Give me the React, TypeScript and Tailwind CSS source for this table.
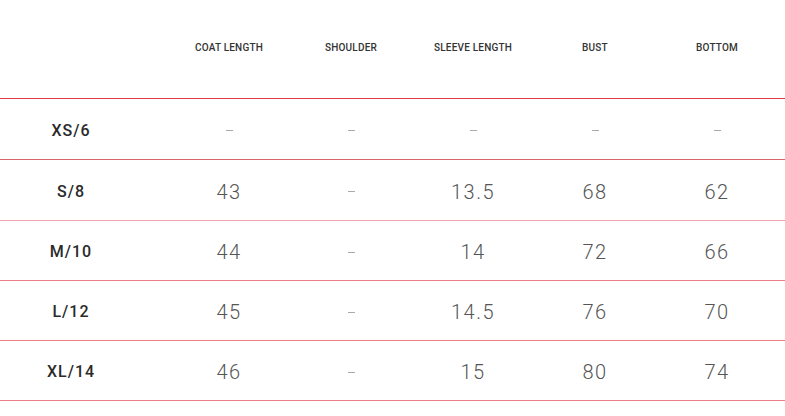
const columns = ["COAT LENGTH", "SHOULDER", "SLEEVE LENGTH", "BUST", "BOTTOM"];

const rows: { size: string; values: string[]; h: string; line: string }[] = [
  { size: "XS/6", values: ["-", "-", "-", "-", "-"], h: "h-[60px]", line: "bg-[#d9646c]" },
  { size: "S/8", values: ["43", "-", "13.5", "68", "62"], h: "h-[60px]", line: "bg-[#f0a3aa]" },
  { size: "M/10", values: ["44", "-", "14", "72", "66"], h: "h-[59px]", line: "bg-[#ec7d86]" },
  { size: "L/12", values: ["45", "-", "14.5", "76", "70"], h: "h-[59px]", line: "bg-[#ee8089]" },
  { size: "XL/14", values: ["46", "-", "15", "80", "74"], h: "h-[59px]", line: "bg-[#ee7e87]" },
];

export default function App() {
  return (
    <div className="w-[785px] h-[416px] bg-white overflow-hidden font-['Roboto',sans-serif]">
      <div className="grid grid-cols-[168px_repeat(5,122px)] h-[98px] items-center">
        <div />
        {columns.map((c) => (
          <div
            key={c}
            className="text-center text-[10px] font-medium tracking-[0.2px] text-[#333] pb-[4px]"
          >
            {c}
          </div>
        ))}
      </div>
      <div className="h-px bg-[#e03a4a]" />
      {rows.map((r) => (
        <div key={r.size}>
          <div className={`grid grid-cols-[168px_repeat(5,122px)] ${r.h} items-center pt-[3px]`}>
            <div className="pr-[26px] text-center text-[16px] font-medium tracking-[1px] text-[#2a2a2a]">
              {r.size}
            </div>
            {r.values.map((v, i) =>
              v === "-" ? (
                <div key={i} className="flex justify-center">
                  <span className="block w-[7px] h-px bg-[#aaa]" />
                </div>
              ) : (
                <div
                  key={i}
                  className="text-center text-[20px] font-light tracking-[1.5px] text-[#555]"
                >
                  {v}
                </div>
              )
            )}
          </div>
          <div className={`h-px ${r.line}`} />
        </div>
      ))}
    </div>
  );
}
